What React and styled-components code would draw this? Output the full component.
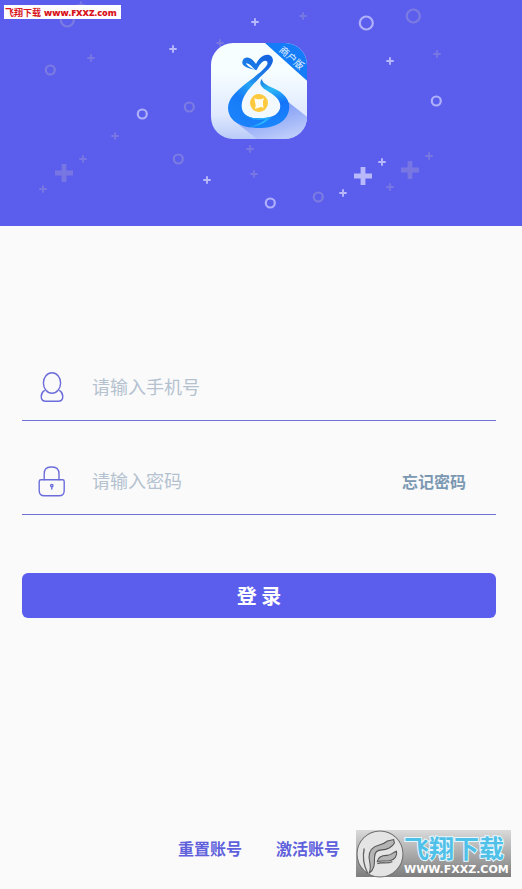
import styled, { createGlobalStyle } from "styled-components";

const rings = [
  { x: 67, y: 20, r: 7, dim: true },
  { x: 50, y: 70, r: 5, dim: true },
  { x: 142, y: 114, r: 5 },
  { x: 189, y: 107, r: 5, dim: true },
  { x: 178, y: 159, r: 5, dim: true },
  { x: 270, y: 203, r: 5 },
  { x: 318, y: 197, r: 5, dim: true },
  { x: 366, y: 23, r: 7 },
  { x: 413, y: 16, r: 7, dim: true },
  { x: 436, y: 101, r: 5 },
];

const crosses = [
  { x: 81, y: 5, dim: true },
  { x: 91, y: 58, dim: true },
  { x: 173, y: 49 },
  { x: 115, y: 136, dim: true },
  { x: 83, y: 159, dim: true },
  { x: 64, y: 173, big: true, dim: true },
  { x: 43, y: 189, dim: true },
  { x: 220, y: 43, dim: true },
  { x: 255, y: 22 },
  { x: 303, y: 16, dim: true },
  { x: 250, y: 149, dim: true },
  { x: 254, y: 174, dim: true },
  { x: 207, y: 180 },
  { x: 390, y: 61 },
  { x: 437, y: 54, dim: true },
  { x: 382, y: 162 },
  { x: 363, y: 176, big: true },
  { x: 343, y: 193 },
  { x: 429, y: 156, dim: true },
  { x: 410, y: 170, big: true, dim: true },
  { x: 390, y: 187, dim: true },
];

const Confetti = () => (
  <ConfettiSvg viewBox="0 0 522 226" preserveAspectRatio="xMidYMid slice">
    {rings.map(({ x, y, r, dim }) => (
      <circle
        key={`${x}-${y}`}
        cx={x + 0.3}
        cy={y}
        r={r - 0.5}
        fill="none"
        stroke={dim ? "#7c7be2" : "#b0b0fa"}
        strokeWidth="2.2"
      />
    ))}
    {crosses.map(({ x, y, big, dim }) => {
      const arm = big ? 9 : 3.7;
      return (
        <path
          key={`${x}-${y}`}
          d={`M${x - arm} ${y}H${x + arm}M${x} ${y - arm}V${y + arm}`}
          stroke={dim ? "#7876e2" : "#b8b8fb"}
          strokeWidth={big ? 4.8 : 1.9}
        />
      );
    })}
  </ConfettiSvg>
);

const Logo = () => (
  <LogoSvg viewBox="18 21 288 288" role="img">
    <defs>
      <linearGradient id="tile" x1="0" y1="0" x2="0" y2="1">
        <stop offset="0.3" stopColor="#f6feff" />
        <stop offset="0.75" stopColor="#dfe8fe" />
        <stop offset="1" stopColor="#b9cbf8" />
      </linearGradient>
      <linearGradient id="shade" x1="0.4" y1="0.2" x2="0.8" y2="0.9">
        <stop offset="0" stopColor="#7f9cf6" />
        <stop offset="1" stopColor="#bccbfa" />
      </linearGradient>
      <linearGradient id="ribbon" x1="0.7" y1="0" x2="0.2" y2="1">
        <stop offset="0" stopColor="#1566e0" />
        <stop offset="0.3" stopColor="#1c84ea" />
        <stop offset="0.42" stopColor="#25a4f4" />
        <stop offset="0.65" stopColor="#167bf8" />
        <stop offset="1" stopColor="#1c84fb" />
      </linearGradient>
      <linearGradient id="pouch" x1="0.4" y1="0" x2="0.6" y2="1">
        <stop offset="0" stopColor="#1468da" />
        <stop offset="0.26" stopColor="#2bb9f5" />
        <stop offset="0.55" stopColor="#1474fa" />
        <stop offset="1" stopColor="#1a86fc" />
      </linearGradient>
      <linearGradient id="fold" x1="0" y1="0" x2="1" y2="0">
        <stop offset="0" stopColor="#1a80fb" />
        <stop offset="0.7" stopColor="#2cc0fb" />
        <stop offset="1" stopColor="#1c8dfb" />
      </linearGradient>
      <clipPath id="corner">
        <rect x="18" y="21" width="288" height="288" rx="66" />
      </clipPath>
    </defs>
    <g clipPath="url(#corner)">
      <rect x="18" y="21" width="288" height="288" fill="url(#tile)" />
      <path d="M242 192L306 242V309H156L84 252Z" fill="url(#shade)" />
      <path d="M180 21H306V134Z" fill="#147cf8" />
      <ellipse cx="166" cy="202" rx="62" ry="54" fill="#f3faff" />
      <path
        d="M171 128C171 140 184 147 204 156C231 167 258 190 252 221C246 258 209 276 162 276C127 276 91 266 75 240L106 228C118 243 143 248 170 247C203 247 226 232 226 211C226 188 202 174 184 163C168 153 160 143 171 128Z"
        fill="url(#pouch)"
      />
      <path
        d="M112 78C113 68 121 64 130 65C140 67 147 75 153 84C160 69 172 56 187 56C201 56 207 69 202 81C196 98 175 113 161 128C136 154 111 178 110 208C109 232 128 246 157 247L195 246C178 260 155 272 132 274C98 268 69 247 69 217C69 187 94 167 117 147C141 128 178 103 187 85C190 75 181 71 172 78C163 86 159 94 154 103C145 99 137 84 125 82C119 82 132 94 150 101C131 98 109 91 112 78Z"
        fill="url(#ribbon)"
      />
      <path
        d="M110 224C121 243 142 248 168 247L202 242C184 258 160 272 132 274C160 264 175 258 182 249C151 256 125 248 110 224Z"
        fill="url(#fold)"
      />
      <circle cx="162" cy="201" r="27" fill="#fdc93e" />
      <path
        d="M148 187L157 190H168L177 186L174 196V206L176 215L167 213L150 219L152 208Z"
        fill="#fffbee"
      />
      <text
        x="259"
        y="76"
        fill="#e8f4ff"
        fontSize="29"
        textAnchor="middle"
        transform="rotate(42 259 67)"
      >
        商户版
      </text>
    </g>
  </LogoSvg>
);

const UserIcon = () => (
  <FieldIcon viewBox="0 0 28 32">
    <ellipse cx="14" cy="12" rx="8.6" ry="10.2" />
    <path d="M6.3 19.6C4.2 21 3.2 23.2 3.2 25.4C3.2 28.6 5 30.2 8 30.2H20C23 30.2 24.8 28.6 24.8 25.4C24.8 23.2 23.8 21 21.7 19.6" />
  </FieldIcon>
);

const LockIcon = () => (
  <FieldIcon viewBox="0 0 28 32">
    <path d="M6.2 14.8V9C6.2 4.6 8.8 2 12.6 2H14.4C18.4 2 21 4.6 21 9V14.8" />
    <path d="M3 14.8H24.6C25.6 14.8 26.2 15.4 26.2 16.4V25.5C26.2 29 24.4 30.8 21 30.8H6.4C3 30.8 1.2 29 1.2 25.5V16.4C1.2 15.4 1.9 14.8 3 14.8Z" />
    <circle cx="13.8" cy="20.6" r="1.2" />
    <path d="M13.8 21.8V24" />
  </FieldIcon>
);

const Emblem = () => (
  <EmblemSvg viewBox="0 0 140 140">
    <circle cx="70" cy="70" r="67" fill="#e4e4e4" stroke="#707070" strokeWidth="3" />
    <path
      d="M38 126C46 112 40 96 38 80C38 60 50 48 68 44C78 42 84 38 92 32L110 28L112 38C106 50 90 58 76 58C62 58 54 66 54 80C54 100 54 116 38 126Z"
      fill="#b4b4b4"
      stroke="#555"
      strokeWidth="3"
    />
    <path
      d="M62 92C64 80 76 74 90 74C102 74 106 66 118 62C122 74 112 88 98 90C84 92 72 88 62 92Z"
      fill="#b4b4b4"
      stroke="#555"
      strokeWidth="3"
    />
    <path
      d="M24 54C18 80 24 106 34 126M62 98C76 92 90 100 106 92"
      fill="none"
      stroke="#666"
      strokeWidth="4"
    />
  </EmblemSvg>
);

export default function App() {
  return (
    <>
      <GlobalStyle />
      <Page>
        <Header>
          <Confetti />
          <Logo />
          <SiteTag>
            <span>飞翔下载</span>
            <b>www.FXXZ.com</b>
          </SiteTag>
        </Header>

        <LoginForm onSubmit={(e) => e.preventDefault()}>
          <Field>
            <label htmlFor="phone" aria-label="手机号">
              <UserIcon />
            </label>
            <Input id="phone" type="tel" placeholder="请输入手机号" />
          </Field>
          <Field>
            <label htmlFor="password" aria-label="密码">
              <LockIcon />
            </label>
            <Input id="password" type="password" placeholder="请输入密码" />
            <ForgotLink href="#forgot">忘记密码</ForgotLink>
          </Field>
          <SubmitButton type="submit">登 录</SubmitButton>
        </LoginForm>

        <Footer>
          <FooterLink href="#reset">重置账号</FooterLink>
          <FooterLink href="#activate">激活账号</FooterLink>
        </Footer>

        <Watermark>
          <Emblem />
          <WatermarkText>
            <strong>飞翔下载</strong>
            <span>WWW.FXXZ.COM</span>
          </WatermarkText>
        </Watermark>
      </Page>
    </>
  );
}

const GlobalStyle = createGlobalStyle`
  * {
    box-sizing: border-box;
  }

  body {
    margin: 0;
    background: #fafafa;
    font-family: "Noto Sans CJK SC", sans-serif;
  }

  a {
    text-decoration: none;
  }
`;

const Page = styled.main`
  position: relative;
  display: flex;
  flex-direction: column;
  min-height: 100vh;
`;

const Header = styled.header`
  position: relative;
  display: flex;
  justify-content: center;
  padding: 43px 4px 87px 0;
  background: #5b5eed;
`;

const ConfettiSvg = styled.svg`
  position: absolute;
  inset: 0;
  width: 100%;
  height: 100%;
`;

const LogoSvg = styled.svg`
  position: relative;
  width: 96px;
  height: 96px;
`;

const SiteTag = styled.div`
  position: absolute;
  top: 5px;
  left: 4px;
  display: flex;
  align-items: center;
  gap: 3px;
  height: 14px;
  padding: 0 4px 0 1px;
  background: #fff;
  color: #d8141c;
  font-size: 9px;
  font-weight: 700;
  white-space: nowrap;

  b {
    font-family: "Open Sans", sans-serif;
  }
`;

const LoginForm = styled.form`
  display: flex;
  flex-direction: column;
  gap: 28px;
  padding: 129px 26px 0 22px;
`;

const Field = styled.div`
  display: flex;
  align-items: center;
  height: 66px;
  padding: 0 30px 1px 16px;
  border-bottom: 1px solid #6f70cf;

  label {
    display: flex;
  }
`;

const FieldIcon = styled.svg`
  width: 28px;
  height: 32px;
  fill: none;
  stroke: #6c6ddb;
  stroke-width: 1.4;
  stroke-linecap: round;
`;

const Input = styled.input`
  flex: 1;
  min-width: 0;
  margin-left: 26px;
  padding: 0 0 2px;
  border: 0;
  outline: 0;
  background: transparent;
  color: #334;
  font-family: inherit;
  font-size: 18px;

  &::placeholder {
    color: #b4c2d0;
    opacity: 1;
  }
`;

const ForgotLink = styled.a`
  color: #7b98b2;
  font-size: 16px;
  font-weight: 700;
`;

const SubmitButton = styled.button`
  height: 45px;
  margin-top: 30px;
  border: 0;
  border-radius: 6px;
  background: #5b5eed;
  color: #fff;
  font-family: inherit;
  font-size: 20px;
  font-weight: 700;
`;

const Footer = styled.footer`
  display: flex;
  justify-content: center;
  gap: 34px;
  margin-top: auto;
  padding: 0 26px 29px 22px;
`;

const FooterLink = styled.a`
  color: #5f61dc;
  font-size: 16px;
  font-weight: 700;
`;

const Watermark = styled.div`
  position: absolute;
  right: 11px;
  bottom: 12px;
  display: flex;
  align-items: center;
  width: 155px;
  height: 47px;
  background: linear-gradient(#dadada, #7d7d7d);
`;

const EmblemSvg = styled.svg`
  flex: none;
  width: 48px;
  height: 48px;
`;

const WatermarkText = styled.div`
  display: flex;
  flex-direction: column;
  color: #fff;
  white-space: nowrap;

  strong {
    color: #4fc0e8;
    font-size: 25px;
    line-height: 32px;
    -webkit-text-stroke: 2px #e6f8ff;
    paint-order: stroke fill;
  }

  span {
    font-family: "DejaVu Sans", sans-serif;
    font-size: 11px;
    font-weight: 700;
    line-height: 13px;
  }
`;
